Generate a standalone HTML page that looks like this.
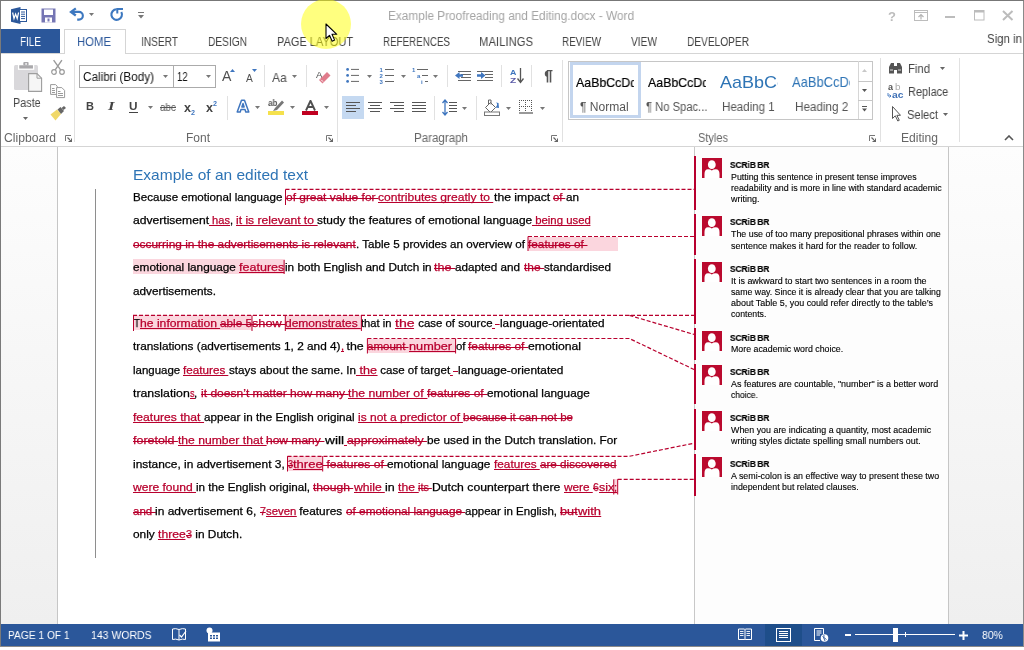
<!DOCTYPE html>
<html><head><meta charset="utf-8">
<style>
*{margin:0;padding:0;box-sizing:border-box}
html,body{width:1024px;height:650px;overflow:hidden;background:#fff;font-family:"Liberation Sans",sans-serif}
.a{position:absolute;white-space:nowrap}
.t{position:absolute;white-space:nowrap;line-height:1;transform-origin:0 0;will-change:transform}
#frameL{left:0;top:0;width:1px;height:647px;background:#7a7a7a}
#frameR{left:1023px;top:0;width:1px;height:647px;background:#8a8a8a}
#frameT{left:0;top:0;width:1024px;height:1px;background:#777}
#frameB{left:0;top:646px;width:1024px;height:1px;background:#8a8a8a}
.tab{font-size:12.5px;color:#444}
.glab{font-size:12px;color:#666}
.sep{position:absolute;width:1px;background:#e1e1e1}
.dl{white-space:pre;font-size:11.1px;color:#000;-webkit-text-stroke:0.25px #000}
.dl u,.dl s{-webkit-text-stroke-color:#b8002e}
.dl u{color:#b8002e;text-decoration:none;background:linear-gradient(#b8002e,#b8002e) 0 11px/100% 1px no-repeat}
.dl s{color:#b8002e;text-decoration:none;background:linear-gradient(#b8002e,#b8002e) 0 7px/100% 1px no-repeat}
.dl i.cb{display:none}
</style></head><body>
<!-- title bar -->
<div class="a" style="left:0;top:0;width:1024px;height:29px;background:#fff"></div>
<div class="t" style="left: 387.5px; top: 10px; font-size: 12.5px; color: rgb(164, 164, 164); transform: scaleX(0.945); transform-origin: 0px 0px;">Example Proofreading and Editing.docx - Word</div>
<!-- tabs -->
<div class="a" style="left:1px;top:29px;width:59px;height:25px;background:#2b579a"></div>
<div class="t tab" style="left: 20px; top: 36px; color: rgb(255, 255, 255); transform: scaleX(0.7953); transform-origin: 0px 0px;">FILE</div>
<div class="a" style="left:64px;top:29px;width:62px;height:25px;border:1px solid #d5d5d5;border-bottom:none;background:#fff;z-index:2"></div>
<div class="t tab" style="left: 77px; top: 36px; color: rgb(43, 87, 154); z-index: 3; transform: scaleX(0.9067); transform-origin: 0px 0px;">HOME</div>
<div class="t tab" style="left: 141px; top: 36px; transform: scaleX(0.811); transform-origin: 0px 0px;">INSERT</div>
<div class="t tab" style="left: 208px; top: 36px; transform: scaleX(0.8136); transform-origin: 0px 0px;">DESIGN</div>
<div class="t tab" style="left: 277px; top: 36px; transform: scaleX(0.8799); transform-origin: 0px 0px;">PAGE LAYOUT</div>
<div class="t tab" style="left: 383px; top: 36px; transform: scaleX(0.7842); transform-origin: 0px 0px;">REFERENCES</div>
<div class="t tab" style="left: 479px; top: 36px; transform: scaleX(0.9038); transform-origin: 0px 0px;">MAILINGS</div>
<div class="t tab" style="left: 562px; top: 36px; transform: scaleX(0.7909); transform-origin: 0px 0px;">REVIEW</div>
<div class="t tab" style="left: 631px; top: 36px; transform: scaleX(0.8137); transform-origin: 0px 0px;">VIEW</div>
<div class="t tab" style="left: 687px; top: 36px; transform: scaleX(0.8113); transform-origin: 0px 0px;">DEVELOPER</div>
<div class="t tab" style="left: 987px; top: 32.3px; font-size: 13px; transform: scaleX(0.8805); transform-origin: 0px 0px;">Sign in</div>
<div class="a" style="left:1px;top:53px;width:1022px;height:1px;background:#d5d5d5;z-index:1"></div>
<!-- ribbon -->
<div class="a" style="left:1px;top:146px;width:1022px;height:1px;background:#d5d5d5"></div>
<div class="sep" style="left:74px;top:60px;height:82px"></div>
<div class="sep" style="left:337px;top:60px;height:82px"></div>
<div class="sep" style="left:562px;top:60px;height:82px"></div>
<div class="sep" style="left:880px;top:58px;height:84px"></div>
<div class="sep" style="left:959px;top:58px;height:84px"></div>
<div class="t glab" style="left: 4px; top: 132px; transform: scaleX(1.0122); transform-origin: 0px 0px;">Clipboard</div>
<div class="t glab" style="left: 186px; top: 132px; transform: scaleX(0.9993); transform-origin: 0px 0px;">Font</div>
<div class="t glab" style="left: 414px; top: 132px; transform: scaleX(0.9635); transform-origin: 0px 0px;">Paragraph</div>
<div class="t glab" style="left: 698px; top: 132px; transform: scaleX(0.9178); transform-origin: 0px 0px;">Styles</div>
<div class="t glab" style="left: 901px; top: 132px; transform: scaleX(1.0081); transform-origin: 0px 0px;">Editing</div>
<!-- doc area -->
<div class="a" style="left:1px;top:147px;width:1022px;height:477px;background:linear-gradient(#fdfdfd,#efefef)"></div>
<div class="a" style="left:57px;top:147px;width:1px;height:477px;background:#c6c6c6"></div>
<div class="a" style="left:58px;top:147px;width:890px;height:477px;background:#fff"></div>
<div class="a" style="left:694px;top:147px;width:1px;height:477px;background:#c8c8c8"></div>
<div class="a" style="left:695px;top:147px;width:253px;height:477px;background:#fdfdfd"></div>
<div class="a" style="left:948px;top:147px;width:1px;height:477px;background:#c6c6c6"></div>
<!-- status bar -->
<div class="a" style="left:1px;top:624px;width:1022px;height:22px;background:#2b579a"></div>
<div class="a" style="left:0;top:647px;width:1024px;height:3px;background:#fff"></div>
<div class="a" style="left:95px;top:189px;width:1px;height:369px;background:#8e8e8e"></div>
<div class="a" style="left:528.00px;top:236.50px;width:90.00px;height:14.25px;background:#fbd6de"></div>
<div class="a" style="left:133.00px;top:259.40px;width:151.50px;height:14.90px;background:#fbd6de"></div>
<div class="a" style="left:133.00px;top:315.40px;width:119.00px;height:15.10px;background:#fbd6de"></div>
<div class="a" style="left:285.30px;top:315.40px;width:76.10px;height:15.10px;background:#fbd6de"></div>
<div class="a" style="left:367.40px;top:338.50px;width:88.20px;height:14.80px;background:#fbd6de"></div>
<div class="a" style="left:287.50px;top:456.20px;width:35.20px;height:15.00px;background:#fbd6de"></div>
<div class="a" style="left:613.75px;top:479.30px;width:3.95px;height:15.20px;background:#fbd6de"></div>
<svg class="a" style="left:0;top:0;z-index:5" width="1024" height="650"><line x1="285.50" y1="189.40" x2="285.50" y2="205.00" stroke="#b8002e" stroke-width="1"></line><line x1="528.00" y1="236.50" x2="528.00" y2="251.00" stroke="#b8002e" stroke-width="1"></line><line x1="284.10" y1="260.00" x2="284.10" y2="274.00" stroke="#b8002e" stroke-width="1"></line><line x1="133.50" y1="315.40" x2="133.50" y2="331.00" stroke="#b8002e" stroke-width="1"></line><line x1="252.00" y1="315.40" x2="252.00" y2="331.00" stroke="#b8002e" stroke-width="1"></line><line x1="285.30" y1="315.40" x2="285.30" y2="331.00" stroke="#b8002e" stroke-width="1"></line><line x1="361.40" y1="315.40" x2="361.40" y2="331.00" stroke="#b8002e" stroke-width="1"></line><line x1="367.40" y1="338.50" x2="367.40" y2="353.50" stroke="#b8002e" stroke-width="1"></line><line x1="455.60" y1="338.50" x2="455.60" y2="353.50" stroke="#b8002e" stroke-width="1"></line><line x1="287.50" y1="456.20" x2="287.50" y2="471.50" stroke="#b8002e" stroke-width="1"></line><line x1="322.70" y1="456.20" x2="322.70" y2="471.50" stroke="#b8002e" stroke-width="1"></line><line x1="613.75" y1="479.30" x2="613.75" y2="494.50" stroke="#b8002e" stroke-width="1"></line><line x1="617.70" y1="479.30" x2="617.70" y2="494.50" stroke="#b8002e" stroke-width="1"></line><path d="M285.5 189.4 H694" fill="none" stroke="#b8002e" stroke-width="1.2" stroke-dasharray="4 2"></path><path d="M528 236.5 H694" fill="none" stroke="#b8002e" stroke-width="1.2" stroke-dasharray="4 2"></path><path d="M133 315.4 H694" fill="none" stroke="#b8002e" stroke-width="1.2" stroke-dasharray="4 2"></path><path d="M629.4 315.4 L694 334.4" fill="none" stroke="#b8002e" stroke-width="1.2" stroke-dasharray="4 2"></path><path d="M367.4 338.5 H629.4 L694 369.5" fill="none" stroke="#b8002e" stroke-width="1.2" stroke-dasharray="4 2"></path><path d="M287.5 456.3 H629.3 L694 443.2" fill="none" stroke="#b8002e" stroke-width="1.2" stroke-dasharray="4 2"></path><path d="M617.7 479.3 H694" fill="none" stroke="#b8002e" stroke-width="1.2" stroke-dasharray="4 2"></path></svg>
<div class="t dl" style="left: 133px; top: 192.4px; transform: scaleX(1.0439); transform-origin: 0px 0px;">Because emotional language </div>
<div class="t dl" style="left: 285.6px; top: 192.4px; transform: scaleX(1.0748); transform-origin: 0px 0px;"><s>of great value for </s></div>
<div class="t dl" style="left: 378.4px; top: 192.4px; transform: scaleX(1.0871); transform-origin: 0px 0px;"><u>contributes greatly to </u></div>
<div class="t dl" style="left: 493.7px; top: 192.4px; transform: scaleX(1.0983); transform-origin: 0px 0px;">the impact </div>
<div class="t dl" style="left: 553.3px; top: 192.4px; transform: scaleX(1.0289); transform-origin: 0px 0px;"><s>of </s></div>
<div class="t dl" style="left: 566px; top: 192.4px; transform: scaleX(1.0532); transform-origin: 0px 0px;">an</div>
<div class="t dl" style="left: 133px; top: 215.4px; transform: scaleX(1.0906); transform-origin: 0px 0px;">advertisement</div>
<div class="t dl" style="left: 209px; top: 215.4px; transform: scaleX(0.9824); transform-origin: 0px 0px;"><u> has</u></div>
<div class="t dl" style="left: 229.6px; top: 215.4px; transform: scaleX(0.9884); transform-origin: 0px 0px;">, </div>
<div class="t dl" style="left: 235.7px; top: 215.4px; transform: scaleX(1.0897); transform-origin: 0px 0px;"><u>it is relevant to </u></div>
<div class="t dl" style="left: 317px; top: 215.4px; transform: scaleX(1.0736); transform-origin: 0px 0px;">study the features of emotional language</div>
<div class="t dl" style="left: 532.2px; top: 215.4px; transform: scaleX(1.0248); transform-origin: 0px 0px;"><u> being used</u></div>
<div class="t dl" style="left: 133px; top: 239.4px; transform: scaleX(1.0717); transform-origin: 0px 0px;"><s>occurring in the advertisements is relevant</s></div>
<div class="t dl" style="left: 355.7px; top: 239.4px; transform: scaleX(1.0477); transform-origin: 0px 0px;">. Table 5 provides an overview of </div>
<div class="t dl" style="left: 528px; top: 239.4px; transform: scaleX(1.0628); transform-origin: 0px 0px;"><s>features of </s></div>
<div class="t dl" style="left: 133px; top: 262.4px; transform: scaleX(1.0628); transform-origin: 0px 0px;">emotional language </div>
<div class="t dl" style="left: 239.2px; top: 262.4px; transform: scaleX(1.1299); transform-origin: 0px 0px;"><u>features</u></div>
<div class="t dl" style="left: 284.5px; top: 262.4px; transform: scaleX(1.0614); transform-origin: 0px 0px;">in both English and Dutch in </div>
<div class="t dl" style="left: 434.4px; top: 262.4px; transform: scaleX(1.1288); transform-origin: 0px 0px;"><s>the </s></div>
<div class="t dl" style="left: 455.3px; top: 262.4px; transform: scaleX(1.0543); transform-origin: 0px 0px;">adapted and </div>
<div class="t dl" style="left: 523.6px; top: 262.4px; transform: scaleX(1.0748); transform-origin: 0px 0px;"><s>the </s></div>
<div class="t dl" style="left: 543.5px; top: 262.4px; transform: scaleX(1.0546); transform-origin: 0px 0px;">standardised</div>
<div class="t dl" style="left: 133px; top: 286.4px; transform: scaleX(1.0599); transform-origin: 0px 0px;">advertisements.</div>
<div class="t dl" style="left: 133.5px; top: 318.4px; transform: scaleX(0.8848); transform-origin: 0px 0px;">T</div>
<div class="t dl" style="left: 139.5px; top: 318.4px; transform: scaleX(1.0969); transform-origin: 0px 0px;"><u>he information </u></div>
<div class="t dl" style="left: 220px; top: 318.4px; transform: scaleX(1.0584); transform-origin: 0px 0px;"><s>able 5</s></div>
<div class="t dl" style="left: 252px; top: 318.4px; transform: scaleX(1.1489); transform-origin: 0px 0px;"><s>show </s></div>
<div class="t dl" style="left: 285.3px; top: 318.4px; transform: scaleX(1.0826); transform-origin: 0px 0px;"><u>demonstrates </u></div>
<div class="t dl" style="left: 361.4px; top: 318.4px; transform: scaleX(1.0086); transform-origin: 0px 0px;">that in </div>
<div class="t dl" style="left: 395px; top: 318.4px; transform: scaleX(1.2709); transform-origin: 0px 0px;"><u>the</u></div>
<div class="t dl" style="left: 414.6px; top: 318.4px; transform: scaleX(1.0301); transform-origin: 0px 0px;"> case of source</div>
<div class="t dl" style="left: 492.1px; top: 318.4px; transform: scaleX(1.002); transform-origin: 0px 0px;"><u> </u></div>
<div class="t dl" style="left: 495.2px; top: 318.4px; transform: scaleX(1.1612); transform-origin: 0px 0px;"><s>-</s></div>
<div class="t dl" style="left: 499.5px; top: 318.4px; transform: scaleX(1.0587); transform-origin: 0px 0px;">language-orientated</div>
<div class="t dl" style="left: 133px; top: 341.4px; transform: scaleX(1.0649); transform-origin: 0px 0px;">translations (advertisements 1, 2 and 4)</div>
<div class="t dl" style="left: 340.5px; top: 341.4px; transform: scaleX(0.9051); transform-origin: 0px 0px;"><u>,</u></div>
<div class="t dl" style="left: 343.3px; top: 341.4px; transform: scaleX(1.1161); transform-origin: 0px 0px;"> the </div>
<div class="t dl" style="left: 367.4px; top: 341.4px; transform: scaleX(1.0376); transform-origin: 0px 0px;"><s>amount </s></div>
<div class="t dl" style="left: 409px; top: 341.4px; transform: scaleX(1.1449); transform-origin: 0px 0px;"><u>number </u></div>
<div class="t dl" style="left: 455.6px; top: 341.4px; transform: scaleX(1.0289); transform-origin: 0px 0px;">of </div>
<div class="t dl" style="left: 468.3px; top: 341.4px; transform: scaleX(1.0754); transform-origin: 0px 0px;"><s>features of </s></div>
<div class="t dl" style="left: 528px; top: 341.4px; transform: scaleX(1.1017); transform-origin: 0px 0px;">emotional</div>
<div class="t dl" style="left: 133px; top: 365.4px; transform: scaleX(1.0338); transform-origin: 0px 0px;">language </div>
<div class="t dl" style="left: 183.4px; top: 365.4px; transform: scaleX(1.0539); transform-origin: 0px 0px;"><u>features </u></div>
<div class="t dl" style="left: 228.9px; top: 365.4px; transform: scaleX(1.0515); transform-origin: 0px 0px;">stays about the same. In</div>
<div class="t dl" style="left: 356px; top: 365.4px; transform: scaleX(1.1342); transform-origin: 0px 0px;"><u> the</u></div>
<div class="t dl" style="left: 377px; top: 365.4px; transform: scaleX(1.0396); transform-origin: 0px 0px;"> case of target</div>
<div class="t dl" style="left: 450.1px; top: 365.4px; transform: scaleX(0.9374); transform-origin: 0px 0px;"><u> </u></div>
<div class="t dl" style="left: 453px; top: 365.4px; transform: scaleX(1.2422); transform-origin: 0px 0px;"><s>-</s></div>
<div class="t dl" style="left: 457.6px; top: 365.4px; transform: scaleX(1.0678); transform-origin: 0px 0px;">language-orientated</div>
<div class="t dl" style="left: 133px; top: 388.4px; transform: scaleX(1.1096); transform-origin: 0px 0px;">translation</div>
<div class="t dl" style="left: 189.8px; top: 388.4px; transform: scaleX(0.8293); transform-origin: 0px 0px;"><u>s</u></div>
<div class="t dl" style="left: 194.4px; top: 388.4px; transform: scaleX(1.037); transform-origin: 0px 0px;">, </div>
<div class="t dl" style="left: 200.8px; top: 388.4px; transform: scaleX(1.0866); transform-origin: 0px 0px;"><s>it doesn’t matter how many </s></div>
<div class="t dl" style="left: 348.2px; top: 388.4px; transform: scaleX(1.1042); transform-origin: 0px 0px;"><u>the number of </u></div>
<div class="t dl" style="left: 427.2px; top: 388.4px; transform: scaleX(1.0808); transform-origin: 0px 0px;"><s>features of </s></div>
<div class="t dl" style="left: 487.2px; top: 388.4px; transform: scaleX(1.0615); transform-origin: 0px 0px;">emotional language</div>
<div class="t dl" style="left: 133px; top: 412.4px; transform: scaleX(1.0932); transform-origin: 0px 0px;"><u>features that </u></div>
<div class="t dl" style="left: 203.8px; top: 412.4px; transform: scaleX(1.0522); transform-origin: 0px 0px;">appear in the English original </div>
<div class="t dl" style="left: 357.6px; top: 412.4px; transform: scaleX(1.0817); transform-origin: 0px 0px;"><u>is not a predictor of </u></div>
<div class="t dl" style="left: 463px; top: 412.4px; transform: scaleX(1.043); transform-origin: 0px 0px;"><s>because it can not be</s></div>
<div class="t dl" style="left: 133px; top: 435.4px; transform: scaleX(1.1224); transform-origin: 0px 0px;"><s>foretold </s></div>
<div class="t dl" style="left: 178px; top: 435.4px; transform: scaleX(1.0941); transform-origin: 0px 0px;"><u>the number that </u></div>
<div class="t dl" style="left: 266.4px; top: 435.4px; transform: scaleX(1.0828); transform-origin: 0px 0px;"><s>how many </s></div>
<div class="t dl" style="left: 324.5px; top: 435.4px; transform: scaleX(1.2333); transform-origin: 0px 0px;">will</div>
<div class="t dl" style="left: 343.5px; top: 435.4px; transform: scaleX(1.002); transform-origin: 0px 0px;"><u> </u></div>
<div class="t dl" style="left: 346.6px; top: 435.4px; transform: scaleX(1.1101); transform-origin: 0px 0px;"><s>approximately </s></div>
<div class="t dl" style="left: 426.7px; top: 435.4px; transform: scaleX(1.0641); transform-origin: 0px 0px;">be used in the Dutch translation. For</div>
<div class="t dl" style="left: 133px; top: 459.4px; transform: scaleX(1.0742); transform-origin: 0px 0px;">instance, in advertisement 3, </div>
<div class="t dl" style="left: 288px; top: 459.4px; transform: scaleX(0.8101); transform-origin: 0px 0px;"><s>3</s></div>
<div class="t dl" style="left: 293px; top: 459.4px; transform: scaleX(1.1741); transform-origin: 0px 0px;"><u>three</u></div>
<div class="t dl" style="left: 322.7px; top: 459.4px; transform: scaleX(1.0974); transform-origin: 0px 0px;"><s> features of </s></div>
<div class="t dl" style="left: 387px; top: 459.4px; transform: scaleX(1.0678); transform-origin: 0px 0px;">emotional language </div>
<div class="t dl" style="left: 493.7px; top: 459.4px; transform: scaleX(1.0632); transform-origin: 0px 0px;"><u>features </u></div>
<div class="t dl" style="left: 539.6px; top: 459.4px; transform: scaleX(1.0499); transform-origin: 0px 0px;"><s>are discovered</s></div>
<div class="t dl" style="left: 133px; top: 482.4px; transform: scaleX(1.0865); transform-origin: 0px 0px;"><u>were found </u></div>
<div class="t dl" style="left: 196px; top: 482.4px; transform: scaleX(1.0508); transform-origin: 0px 0px;">in the English original, </div>
<div class="t dl" style="left: 313.3px; top: 482.4px; transform: scaleX(1.086); transform-origin: 0px 0px;"><s>though </s></div>
<div class="t dl" style="left: 353.5px; top: 482.4px; transform: scaleX(1.0996); transform-origin: 0px 0px;"><u>while </u></div>
<div class="t dl" style="left: 384.7px; top: 482.4px; transform: scaleX(1.1264); transform-origin: 0px 0px;">in </div>
<div class="t dl" style="left: 397.9px; top: 482.4px; transform: scaleX(1.0964); transform-origin: 0px 0px;"><u>the </u></div>
<div class="t dl" style="left: 418.2px; top: 482.4px; transform: scaleX(0.9868); transform-origin: 0px 0px;"><s>its </s></div>
<div class="t dl" style="left: 432.2px; top: 482.4px; transform: scaleX(1.1008); transform-origin: 0px 0px;">Dutch counterpart there </div>
<div class="t dl" style="left: 563.9px; top: 482.4px; transform: scaleX(1.0648); transform-origin: 0px 0px;"><u>were </u></div>
<div class="t dl" style="left: 592.8px; top: 482.4px; transform: scaleX(0.9235); transform-origin: 0px 0px;"><s>6</s></div>
<div class="t dl" style="left: 598.5px; top: 482.4px; transform: scaleX(1.1244); transform-origin: 0px 0px;"><u>six</u></div>
<div class="t dl" style="left: 133px; top: 506.4px; transform: scaleX(1.0373); transform-origin: 0px 0px;"><s>and </s></div>
<div class="t dl" style="left: 155.4px; top: 506.4px; transform: scaleX(1.0804); transform-origin: 0px 0px;">in advertisement 6, </div>
<div class="t dl" style="left: 260px; top: 506.4px; transform: scaleX(0.9559); transform-origin: 0px 0px;"><s>7</s></div>
<div class="t dl" style="left: 265.9px; top: 506.4px; transform: scaleX(1.0267); transform-origin: 0px 0px;"><u>seven</u></div>
<div class="t dl" style="left: 296.3px; top: 506.4px; transform: scaleX(1.0703); transform-origin: 0px 0px;"> features </div>
<div class="t dl" style="left: 345.8px; top: 506.4px; transform: scaleX(1.0627); transform-origin: 0px 0px;"><s>of emotional language </s></div>
<div class="t dl" style="left: 465.1px; top: 506.4px; transform: scaleX(1.0358); transform-origin: 0px 0px;">appear in English, </div>
<div class="t dl" style="left: 560.3px; top: 506.4px; transform: scaleX(1.1477); transform-origin: 0px 0px;"><s>but</s></div>
<div class="t dl" style="left: 578px; top: 506.4px; transform: scaleX(1.1655); transform-origin: 0px 0px;"><u>with</u></div>
<div class="t dl" style="left: 133px; top: 529.4px; transform: scaleX(1.0709); transform-origin: 0px 0px;">only </div>
<div class="t dl" style="left: 158.1px; top: 529.4px; transform: scaleX(1.0989); transform-origin: 0px 0px;"><u>three</u></div>
<div class="t dl" style="left: 185.9px; top: 529.4px; transform: scaleX(0.9559); transform-origin: 0px 0px;"><s>3</s></div>
<div class="t dl" style="left: 191.8px; top: 529.4px; transform: scaleX(1.0709); transform-origin: 0px 0px;"> in Dutch.</div>
<div class="t dl" style="left:614px;top:482.40px"><u>;</u></div>
<div class="a" style="left:694px;top:156.0px;width:2.4px;height:53.5px;background:#b8002e"></div>
<div class="a" style="left:694px;top:213.7px;width:2.4px;height:41.6px;background:#b8002e"></div>
<div class="a" style="left:694px;top:259.4px;width:2.4px;height:64.9px;background:#b8002e"></div>
<div class="a" style="left:694px;top:328.3px;width:2.4px;height:31.9px;background:#b8002e"></div>
<div class="a" style="left:694px;top:363.8px;width:2.4px;height:40.7px;background:#b8002e"></div>
<div class="a" style="left:694px;top:409.2px;width:2.4px;height:41.0px;background:#b8002e"></div>
<div class="a" style="left:694px;top:454.3px;width:2.4px;height:41.6px;background:#b8002e"></div>
<svg class="a" style="left:702px;top:158px" width="20" height="20" viewBox="0 0 20 20"><rect width="20" height="20" fill="#ba0a2e"></rect><ellipse cx="9.8" cy="6.7" rx="3.9" ry="4.4" fill="#fff"></ellipse><path d="M2.5 20 V16 Q2.5 11.3 6 11.3 Q8.5 11.3 9.8 12.6 Q11.1 11.3 13.8 11.3 Q17.5 11.3 17.5 16 V20 Z" fill="#fff"></path></svg>
<div class="t" style="left: 730.4px; top: 159.84px; font-size: 9.4px; font-weight: bold; color: rgb(0, 0, 0); -webkit-text-stroke: 0.2px rgb(0, 0, 0); transform: scaleX(0.8835); transform-origin: 0px 0px;">SCRiB BR</div>
<div class="t" style="left: 730.6px; top: 172.62px; font-size: 8.6px; color: rgb(0, 0, 0); -webkit-text-stroke: 0.12px rgb(0, 0, 0); transform: scaleX(1.0278); transform-origin: 0px 0px;">Putting this sentence in present tense improves</div>
<div class="t" style="left: 730.6px; top: 184.02px; font-size: 8.6px; color: rgb(0, 0, 0); -webkit-text-stroke: 0.12px rgb(0, 0, 0); transform: scaleX(1.0325); transform-origin: 0px 0px;">readability and is more in line with standard academic</div>
<div class="t" style="left: 730.6px; top: 195.22px; font-size: 8.6px; color: rgb(0, 0, 0); -webkit-text-stroke: 0.12px rgb(0, 0, 0); transform: scaleX(1.0428); transform-origin: 0px 0px;">writing.</div>
<svg class="a" style="left:702px;top:216px" width="20" height="20" viewBox="0 0 20 20"><rect width="20" height="20" fill="#ba0a2e"></rect><ellipse cx="9.8" cy="6.7" rx="3.9" ry="4.4" fill="#fff"></ellipse><path d="M2.5 20 V16 Q2.5 11.3 6 11.3 Q8.5 11.3 9.8 12.6 Q11.1 11.3 13.8 11.3 Q17.5 11.3 17.5 16 V20 Z" fill="#fff"></path></svg>
<div class="t" style="left: 730.4px; top: 217.24px; font-size: 9.4px; font-weight: bold; color: rgb(0, 0, 0); -webkit-text-stroke: 0.2px rgb(0, 0, 0); transform: scaleX(0.8835); transform-origin: 0px 0px;">SCRiB BR</div>
<div class="t" style="left: 730.6px; top: 230.22px; font-size: 8.6px; color: rgb(0, 0, 0); -webkit-text-stroke: 0.12px rgb(0, 0, 0); transform: scaleX(1.0309); transform-origin: 0px 0px;">The use of too many prepositional phrases within one</div>
<div class="t" style="left: 730.6px; top: 241.52px; font-size: 8.6px; color: rgb(0, 0, 0); -webkit-text-stroke: 0.12px rgb(0, 0, 0); transform: scaleX(1.0422); transform-origin: 0px 0px;">sentence makes it hard for the reader to follow.</div>
<svg class="a" style="left:702px;top:262px" width="20" height="20" viewBox="0 0 20 20"><rect width="20" height="20" fill="#ba0a2e"></rect><ellipse cx="9.8" cy="6.7" rx="3.9" ry="4.4" fill="#fff"></ellipse><path d="M2.5 20 V16 Q2.5 11.3 6 11.3 Q8.5 11.3 9.8 12.6 Q11.1 11.3 13.8 11.3 Q17.5 11.3 17.5 16 V20 Z" fill="#fff"></path></svg>
<div class="t" style="left: 730.4px; top: 263.64px; font-size: 9.4px; font-weight: bold; color: rgb(0, 0, 0); -webkit-text-stroke: 0.2px rgb(0, 0, 0); transform: scaleX(0.8835); transform-origin: 0px 0px;">SCRiB BR</div>
<div class="t" style="left: 730.6px; top: 276.62px; font-size: 8.6px; color: rgb(0, 0, 0); -webkit-text-stroke: 0.12px rgb(0, 0, 0); transform: scaleX(1.0393); transform-origin: 0px 0px;">It is awkward to start two sentences in a room the</div>
<div class="t" style="left: 730.6px; top: 287.92px; font-size: 8.6px; color: rgb(0, 0, 0); -webkit-text-stroke: 0.12px rgb(0, 0, 0); transform: scaleX(1.0175); transform-origin: 0px 0px;">same way. Since it is already clear that you are talking</div>
<div class="t" style="left: 730.6px; top: 299.12px; font-size: 8.6px; color: rgb(0, 0, 0); -webkit-text-stroke: 0.12px rgb(0, 0, 0); transform: scaleX(1.0437); transform-origin: 0px 0px;">about Table 5, you could refer directly to the table’s</div>
<div class="t" style="left: 730.6px; top: 310.42px; font-size: 8.6px; color: rgb(0, 0, 0); -webkit-text-stroke: 0.12px rgb(0, 0, 0); transform: scaleX(1.0151); transform-origin: 0px 0px;">contents.</div>
<svg class="a" style="left:702px;top:331px" width="20" height="20" viewBox="0 0 20 20"><rect width="20" height="20" fill="#ba0a2e"></rect><ellipse cx="9.8" cy="6.7" rx="3.9" ry="4.4" fill="#fff"></ellipse><path d="M2.5 20 V16 Q2.5 11.3 6 11.3 Q8.5 11.3 9.8 12.6 Q11.1 11.3 13.8 11.3 Q17.5 11.3 17.5 16 V20 Z" fill="#fff"></path></svg>
<div class="t" style="left: 730.4px; top: 333.04px; font-size: 9.4px; font-weight: bold; color: rgb(0, 0, 0); -webkit-text-stroke: 0.2px rgb(0, 0, 0); transform: scaleX(0.8835); transform-origin: 0px 0px;">SCRiB BR</div>
<div class="t" style="left: 730.6px; top: 345.22px; font-size: 8.6px; color: rgb(0, 0, 0); -webkit-text-stroke: 0.12px rgb(0, 0, 0); transform: scaleX(1.0257); transform-origin: 0px 0px;">More academic word choice.</div>
<svg class="a" style="left:702px;top:365px" width="20" height="20" viewBox="0 0 20 20"><rect width="20" height="20" fill="#ba0a2e"></rect><ellipse cx="9.8" cy="6.7" rx="3.9" ry="4.4" fill="#fff"></ellipse><path d="M2.5 20 V16 Q2.5 11.3 6 11.3 Q8.5 11.3 9.8 12.6 Q11.1 11.3 13.8 11.3 Q17.5 11.3 17.5 16 V20 Z" fill="#fff"></path></svg>
<div class="t" style="left: 730.4px; top: 367.04px; font-size: 9.4px; font-weight: bold; color: rgb(0, 0, 0); -webkit-text-stroke: 0.2px rgb(0, 0, 0); transform: scaleX(0.8835); transform-origin: 0px 0px;">SCRiB BR</div>
<div class="t" style="left: 730.6px; top: 379.62px; font-size: 8.6px; color: rgb(0, 0, 0); -webkit-text-stroke: 0.12px rgb(0, 0, 0); transform: scaleX(1.0407); transform-origin: 0px 0px;">As features are countable, "number" is a better word</div>
<div class="t" style="left: 730.6px; top: 390.92px; font-size: 8.6px; color: rgb(0, 0, 0); -webkit-text-stroke: 0.12px rgb(0, 0, 0); transform: scaleX(0.9877); transform-origin: 0px 0px;">choice.</div>
<svg class="a" style="left:702px;top:411px" width="20" height="20" viewBox="0 0 20 20"><rect width="20" height="20" fill="#ba0a2e"></rect><ellipse cx="9.8" cy="6.7" rx="3.9" ry="4.4" fill="#fff"></ellipse><path d="M2.5 20 V16 Q2.5 11.3 6 11.3 Q8.5 11.3 9.8 12.6 Q11.1 11.3 13.8 11.3 Q17.5 11.3 17.5 16 V20 Z" fill="#fff"></path></svg>
<div class="t" style="left: 730.4px; top: 412.84px; font-size: 9.4px; font-weight: bold; color: rgb(0, 0, 0); -webkit-text-stroke: 0.2px rgb(0, 0, 0); transform: scaleX(0.8835); transform-origin: 0px 0px;">SCRiB BR</div>
<div class="t" style="left: 730.6px; top: 425.52px; font-size: 8.6px; color: rgb(0, 0, 0); -webkit-text-stroke: 0.12px rgb(0, 0, 0); transform: scaleX(1.0331); transform-origin: 0px 0px;">When you are indicating a quantity, most academic</div>
<div class="t" style="left: 730.6px; top: 436.82px; font-size: 8.6px; color: rgb(0, 0, 0); -webkit-text-stroke: 0.12px rgb(0, 0, 0); transform: scaleX(1.0342); transform-origin: 0px 0px;">writing styles dictate spelling small numbers out.</div>
<svg class="a" style="left:702px;top:457px" width="20" height="20" viewBox="0 0 20 20"><rect width="20" height="20" fill="#ba0a2e"></rect><ellipse cx="9.8" cy="6.7" rx="3.9" ry="4.4" fill="#fff"></ellipse><path d="M2.5 20 V16 Q2.5 11.3 6 11.3 Q8.5 11.3 9.8 12.6 Q11.1 11.3 13.8 11.3 Q17.5 11.3 17.5 16 V20 Z" fill="#fff"></path></svg>
<div class="t" style="left: 730.4px; top: 458.74px; font-size: 9.4px; font-weight: bold; color: rgb(0, 0, 0); -webkit-text-stroke: 0.2px rgb(0, 0, 0); transform: scaleX(0.8835); transform-origin: 0px 0px;">SCRiB BR</div>
<div class="t" style="left: 730.6px; top: 471.62px; font-size: 8.6px; color: rgb(0, 0, 0); -webkit-text-stroke: 0.12px rgb(0, 0, 0); transform: scaleX(1.0332); transform-origin: 0px 0px;">A semi-colon is an effective way to present these two</div>
<div class="t" style="left: 730.6px; top: 483.02px; font-size: 8.6px; color: rgb(0, 0, 0); -webkit-text-stroke: 0.12px rgb(0, 0, 0); transform: scaleX(1.0279); transform-origin: 0px 0px;">independent but related clauses.</div>
<svg class="a" style="left:10px;top:6.5px;z-index:4" width="17" height="17" viewBox="0 0 17 17"><path d="M1 2.2 L10.5 0 V17 L1 14.8 Z" fill="#2b579a"></path><rect x="9.5" y="2.5" width="7" height="12" fill="#fff" stroke="#2b579a" stroke-width="1"></rect><path d="M11 5 H15 M11 7.2 H15 M11 9.4 H15 M11 11.6 H15" stroke="#2b579a" stroke-width="1"></path><path d="M2.6 5.5 L4 11.5 L5.6 7 L7.2 11.5 L8.6 5.5" fill="none" stroke="#fff" stroke-width="1.2"></path></svg>
<svg class="a" style="left:41px;top:8px;z-index:4" width="15" height="15" viewBox="0 0 15 15"><path d="M0.5 0.5 H14.5 V14.5 H0.5 Z" fill="#7676b4"></path><rect x="3" y="1.5" width="9" height="5.5" fill="#fff"></rect><rect x="4" y="9.5" width="7" height="5" fill="#fff"></rect><rect x="6.5" y="10.5" width="2" height="3" fill="#7676b4"></rect></svg>
<svg class="a" style="left:69px;top:7px;z-index:4" width="17" height="15" viewBox="0 0 17 15"><path d="M3 4.9 H10 A3.85 3.85 0 0 1 10 12.6 H8.2" fill="none" stroke="#3d78c0" stroke-width="2.1"></path><path d="M6.8 1.3 L2 4.9 L6.8 8.5" fill="none" stroke="#3d78c0" stroke-width="2.3" stroke-linejoin="miter"></path></svg>
<svg class="a" style="left:89px;top:13px;z-index:4" width="6" height="4" viewBox="0 0 6 4"><path d="M0 0 H5 L2.5 3 Z" fill="#777"></path></svg>
<svg class="a" style="left:109px;top:7px;z-index:4" width="16" height="16" viewBox="0 0 16 16"><path d="M7.6 2.3 A5.3 5.3 0 1 0 12.3 5" fill="none" stroke="#3d78c0" stroke-width="2.1"></path><path d="M7.3 2 H14 M8.3 1 V6.5" fill="none" stroke="#3d78c0" stroke-width="2"></path></svg>
<svg class="a" style="left:137px;top:11px;z-index:4" width="8" height="9" viewBox="0 0 8 9"><path d="M1 1.5 H7" stroke="#777" stroke-width="1"></path><path d="M1 4 H7 L4 7.5 Z" fill="#777"></path></svg>
<div class="t" style="left:888px;top:9.5px;font-size:13px;color:#bcbcbc;font-weight:bold">?</div>
<svg class="a" style="left:914px;top:10px;z-index:4" width="14" height="11" viewBox="0 0 14 11"><rect x="0.5" y="0.5" width="13" height="10" fill="none" stroke="#bcbcbc"></rect><path d="M0.5 2.5 H13.5" stroke="#bcbcbc"></path><path d="M7 9.5 V4.5 M4.5 7 L7 4.5 L9.5 7" fill="none" stroke="#b5b5b5" stroke-width="1.2"></path></svg>
<svg class="a" style="left:945px;top:16px;z-index:4" width="10" height="2" viewBox="0 0 10 2"><rect width="10" height="2" fill="#bcbcbc"></rect></svg>
<svg class="a" style="left:974px;top:10px;z-index:4" width="11" height="11" viewBox="0 0 11 11"><rect x="0.5" y="0.5" width="9.5" height="9.5" fill="none" stroke="#bcbcbc"></rect><rect x="0.5" y="0.5" width="9.5" height="2" fill="#bcbcbc"></rect></svg>
<svg class="a" style="left:1002px;top:10px;z-index:4" width="12" height="11" viewBox="0 0 12 11"><path d="M1 1 L10.5 10 M10.5 1 L1 10" stroke="#bcbcbc" stroke-width="2"></path></svg>
<svg class="a" style="left:13px;top:61px;z-index:4" width="31" height="32" viewBox="0 0 31 32"><rect x="1" y="3.9" width="24" height="25" rx="1.5" fill="#d9d8db"></rect><rect x="5.6" y="3.6" width="15" height="4.6" fill="#a9a8ab" stroke="#fff" stroke-width="1.3"></rect><rect x="10.3" y="1" width="5.3" height="3.6" rx="1" fill="#a9a8ab"></rect><rect x="12.3" y="2.2" width="1.6" height="1.5" fill="#fff"></rect><path d="M15.6 12.6 H24 L28.6 17.2 V30.4 H15.6 Z" fill="#f6f6f6" stroke="#9e9e9e" stroke-width="1.1"></path><path d="M24 12.6 V17.2 H28.6" fill="none" stroke="#9e9e9e" stroke-width="1"></path></svg>
<div class="t" style="left: 12.7px; top: 96.64px; font-size: 12px; color: rgb(68, 68, 68); transform: scaleX(0.8994); transform-origin: 0px 0px;">Paste</div>
<svg class="a" style="left:23px;top:117px;z-index:4" width="6" height="4" viewBox="0 0 6 4"><path d="M0 0 H5 L2.5 3 Z" fill="#666"></path></svg>
<svg class="a" style="left:50px;top:59px;z-index:4" width="17" height="17" viewBox="0 0 17 17"><path d="M3.6 1.2 L10.6 10.9 M11.9 1.2 L5.2 10.9" stroke="#9a9a9a" stroke-width="1.4"></path><circle cx="4" cy="13" r="2.3" fill="none" stroke="#9a9a9a" stroke-width="1.2"></circle><circle cx="12" cy="13" r="2.3" fill="none" stroke="#9a9a9a" stroke-width="1.2"></circle></svg>
<svg class="a" style="left:50px;top:83px;z-index:4" width="16" height="16" viewBox="0 0 16 16"><path d="M0.6 1.6 H5.6 L7.2 3.2 V11.4 H0.6 Z" fill="#fff" stroke="#9a9a9a" stroke-width="1"></path><path d="M2 5.5 H4.5 M2 7.5 H5 M2 9.5 H5" stroke="#9a9a9a" stroke-width="1"></path><path d="M6.6 4.6 H11.8 L14.6 7.4 V14.6 H6.6 Z" fill="#fff" stroke="#9a9a9a" stroke-width="1"></path><path d="M8 8.5 H10.5 M8 10.5 H13 M8 12.5 H13" stroke="#9a9a9a" stroke-width="1"></path></svg>
<svg class="a" style="left:50px;top:106px;z-index:4" width="17" height="15" viewBox="0 0 17 15"><path d="M0.5 8.5 L7 3.5 L11 8 L5.5 14.5 Z" fill="#f0d868"></path><path d="M7.5 3.5 L10.5 1 L14 5 L11 8 Z" fill="#666"></path><path d="M11.5 2 L14 0 L16 2 L13.5 4 Z" fill="#666"></path></svg>
<div class="a" style="left:79px;top:65px;width:95px;height:23px;border:1px solid #ababab;background:#fff"></div>
<div class="a" style="left:173px;top:65px;width:43px;height:23px;border:1px solid #ababab;background:#fff"></div>
<div class="t" style="left: 82.5px; top: 70.54px; font-size: 12px; color: rgb(17, 17, 17); transform: scaleX(0.9768); transform-origin: 0px 0px;">Calibri (Body)</div>
<svg class="a" style="left:163px;top:75px;z-index:4" width="6" height="4" viewBox="0 0 6 4"><path d="M0 0 H5 L2.5 3 Z" fill="#777"></path></svg>
<div class="t" style="left: 177px; top: 70.84px; font-size: 12px; color: rgb(17, 17, 17); transform: scaleX(0.7935); transform-origin: 0px 0px;">12</div>
<svg class="a" style="left:206px;top:75px;z-index:4" width="6" height="4" viewBox="0 0 6 4"><path d="M0 0 H5 L2.5 3 Z" fill="#777"></path></svg>
<div class="t" style="left: 222.3px; top: 70.32px; font-size: 13.8px; color: rgb(80, 80, 80); transform: scaleX(1.0214); transform-origin: 0px 0px;">A</div>
<svg class="a" style="left:230px;top:69px;z-index:4" width="6" height="4" viewBox="0 0 6 4"><path d="M0 3 H5 L2.5 0 Z" fill="#3f76bf"></path></svg>
<div class="t" style="left: 245.5px; top: 73.53px; font-size: 10px; color: rgb(80, 80, 80); transform: scaleX(1.0192); transform-origin: 0px 0px;">A</div>
<svg class="a" style="left:252px;top:69px;z-index:4" width="6" height="4" viewBox="0 0 6 4"><path d="M0 0 H5 L2.5 3 Z" fill="#3f76bf"></path></svg>
<div class="sep" style="left:264px;top:65px;height:22px"></div>
<div class="t" style="left: 272.4px; top: 70.57px; font-size: 13.5px; color: rgb(80, 80, 80); transform: scaleX(0.8961); transform-origin: 0px 0px;">Aa</div>
<svg class="a" style="left:292px;top:75px;z-index:4" width="6" height="4" viewBox="0 0 6 4"><path d="M0 0 H5 L2.5 3 Z" fill="#777"></path></svg>
<div class="sep" style="left:306px;top:65px;height:22px"></div>
<div class="t" style="left: 316px; top: 69.96px; font-size: 9.5px; color: rgb(80, 80, 80); transform: scaleX(1.0246); transform-origin: 0px 0px;">A</div>
<svg class="a" style="left:318px;top:69px;z-index:4" width="14" height="15" viewBox="0 0 14 15"><path d="M5.5 13.5 L12.5 6.5 L9 3 L2 10 Z" fill="#e07c8c"></path><path d="M2 10 L5.5 13.5 L4.5 14.5 L1 11 Z" fill="#e07c8c"></path><path d="M3.5 11 L5 12.5" stroke="#fff" stroke-width="0.8"></path></svg>
<div class="t" style="left: 85.5px; top: 101.09px; font-size: 11px; color: rgb(68, 68, 68); font-weight: bold; transform: scaleX(0.9556); transform-origin: 0px 0px;">B</div>
<div class="t" style="left: 107.5px; top: 100.67px; font-size: 11.5px; color: rgb(68, 68, 68); font-style: italic; font-family: &quot;Liberation Serif&quot;, serif; font-weight: bold; transform: scaleX(1.4495); transform-origin: 0px 0px;">I</div>
<div class="t" style="left: 129.2px; top: 101.09px; font-size: 11px; color: rgb(68, 68, 68); font-weight: bold; transform: scaleX(1.0688); transform-origin: 0px 0px;">U</div>
<div class="a" style="left:129px;top:112px;width:9px;height:1.3px;background:#444"></div>
<svg class="a" style="left:148px;top:106px;z-index:4" width="6" height="4" viewBox="0 0 6 4"><path d="M0 0 H5 L2.5 3 Z" fill="#777"></path></svg>
<div class="t" style="left: 160px; top: 101.91px; font-size: 10.5px; color: rgb(85, 85, 85); transform: scaleX(0.9328); transform-origin: 0px 0px;">abc</div>
<div class="a" style="left:160px;top:107px;width:16px;height:1px;background:#555"></div>
<div class="t" style="left: 184px; top: 101.84px; font-size: 12px; color: rgb(68, 68, 68); font-weight: bold; transform: scaleX(1.0467); transform-origin: 0px 0px;">x</div>
<div class="t" style="left: 191px; top: 108.57px; font-size: 7px; color: rgb(63, 118, 191); font-weight: bold; transform: scaleX(1.024); transform-origin: 0px 0px;">2</div>
<div class="t" style="left: 206px; top: 101.84px; font-size: 12px; color: rgb(68, 68, 68); font-weight: bold; transform: scaleX(1.0467); transform-origin: 0px 0px;">x</div>
<div class="t" style="left: 213px; top: 99.57px; font-size: 7px; color: rgb(63, 118, 191); font-weight: bold; transform: scaleX(1.024); transform-origin: 0px 0px;">2</div>
<div class="sep" style="left:227px;top:96px;height:24px"></div>
<svg class="a" style="left:236px;top:99px;z-index:4" width="14" height="15" viewBox="0 0 14 15"><path d="M1.2 13 L5.5 1.2 H8.5 L12.8 13 H9.8 L9 10.6 H5 L4.2 13 Z M5.9 8 H8.1 L7 4.6 Z" fill="#fff" fill-rule="evenodd" stroke="#3f76bf" stroke-width="1.5" stroke-linejoin="round"></path></svg>
<svg class="a" style="left:255px;top:106px;z-index:4" width="6" height="4" viewBox="0 0 6 4"><path d="M0 0 H5 L2.5 3 Z" fill="#777"></path></svg>
<div class="t" style="left: 268px; top: 98.88px; font-size: 9px; color: rgb(85, 85, 85); font-weight: bold; font-family: &quot;Liberation Sans&quot;, sans-serif; transform: scaleX(0.9034); transform-origin: 0px 0px;">ab</div>
<svg class="a" style="left:271px;top:99px;z-index:4" width="14" height="13" viewBox="0 0 14 13"><path d="M2 12 L4 9 L11 1.5 L13 3.5 L6 11 Z" fill="#777"></path></svg>
<div class="a" style="left:268px;top:111px;width:16px;height:4px;background:#f5e14c"></div>
<svg class="a" style="left:290px;top:106px;z-index:4" width="6" height="4" viewBox="0 0 6 4"><path d="M0 0 H5 L2.5 3 Z" fill="#777"></path></svg>
<svg class="a" style="left:305px;top:100px;z-index:4" width="11" height="11" viewBox="0 0 11 11"><path d="M1 10.5 L5.5 0.8 L10 10.5 M2.8 7 H8.2" fill="none" stroke="#505050" stroke-width="1.9"></path></svg>
<div class="a" style="left:302px;top:111px;width:16px;height:4px;background:#c00020"></div>
<svg class="a" style="left:324px;top:106px;z-index:4" width="6" height="4" viewBox="0 0 6 4"><path d="M0 0 H5 L2.5 3 Z" fill="#777"></path></svg>
<svg class="a" style="left:346px;top:67px;z-index:4" width="14" height="17" viewBox="0 0 14 17"><circle cx="1.6" cy="2.4" r="1.4" fill="#3f76bf"></circle><path d="M5 2.4 H13" stroke="#666" stroke-width="1"></path><circle cx="1.6" cy="8.4" r="1.4" fill="#3f76bf"></circle><path d="M5 8.4 H13" stroke="#666" stroke-width="1"></path><circle cx="1.6" cy="14.4" r="1.4" fill="#3f76bf"></circle><path d="M5 14.4 H13" stroke="#666" stroke-width="1"></path></svg>
<svg class="a" style="left:367px;top:75px;z-index:4" width="6" height="4" viewBox="0 0 6 4"><path d="M0 0 H5 L2.5 3 Z" fill="#777"></path></svg>
<svg class="a" style="left:379px;top:66px;z-index:4" width="16" height="18" viewBox="0 0 16 18"><text x="0.5" y="6" font-size="6" font-weight="bold" fill="#3f76bf" font-family="Liberation Sans">1</text><path d="M6 3.5 H15" stroke="#666" stroke-width="1"></path><text x="0.5" y="12" font-size="6" font-weight="bold" fill="#3f76bf" font-family="Liberation Sans">2</text><path d="M6 9.5 H15" stroke="#666" stroke-width="1"></path><text x="0.5" y="18" font-size="6" font-weight="bold" fill="#3f76bf" font-family="Liberation Sans">3</text><path d="M6 15.5 H15" stroke="#666" stroke-width="1"></path></svg>
<svg class="a" style="left:401px;top:75px;z-index:4" width="6" height="4" viewBox="0 0 6 4"><path d="M0 0 H5 L2.5 3 Z" fill="#777"></path></svg>
<svg class="a" style="left:412px;top:66px;z-index:4" width="18" height="18" viewBox="0 0 18 18"><text x="0" y="6" font-size="6" font-weight="bold" fill="#3f76bf" font-family="Liberation Sans">1</text><path d="M5 3.5 H16" stroke="#666"></path><text x="5" y="12" font-size="6" font-weight="bold" fill="#3f76bf" font-family="Liberation Sans">a</text><path d="M10 9.5 H16" stroke="#666"></path><text x="9" y="17.5" font-size="6" font-weight="bold" fill="#3f76bf" font-family="Liberation Sans">i</text><path d="M13 15.5 H16" stroke="#666"></path></svg>
<svg class="a" style="left:433px;top:75px;z-index:4" width="6" height="4" viewBox="0 0 6 4"><path d="M0 0 H5 L2.5 3 Z" fill="#777"></path></svg>
<div class="sep" style="left:447px;top:65px;height:22px"></div>
<svg class="a" style="left:455px;top:70px;z-index:4" width="17" height="12" viewBox="0 0 17 12"><path d="M3 1.5 H16 M6 4.5 H16 M6 7.5 H16 M3 10.5 H16" stroke="#666" stroke-width="1"></path><path d="M0 5.5 L4.5 2 V4.3 H8 V6.7 H4.5 V9 Z" fill="#3f76bf"></path></svg>
<svg class="a" style="left:477px;top:70px;z-index:4" width="17" height="12" viewBox="0 0 17 12"><path d="M0 1.5 H16 M8 4.5 H16 M8 7.5 H16 M0 10.5 H16" stroke="#666" stroke-width="1"></path><path d="M8.5 5.5 L4 2 V4.3 H0 V6.7 H4 V9 Z" fill="#3f76bf"></path></svg>
<div class="sep" style="left:501px;top:65px;height:22px"></div>
<div class="t" style="left: 509.8px; top: 68.65px; font-size: 7.5px; color: rgb(63, 118, 191); font-weight: bold; transform: scaleX(1.1804); transform-origin: 0px 0px;">A</div>
<div class="t" style="left: 510px; top: 76.65px; font-size: 7.5px; color: rgb(90, 90, 168); font-weight: bold; transform: scaleX(1.3497); transform-origin: 0px 0px;">Z</div>
<svg class="a" style="left:517px;top:68px;z-index:4" width="7" height="16" viewBox="0 0 7 16"><path d="M3.5 0 V14 M0.5 10.5 L3.5 14.5 L6.5 10.5" fill="none" stroke="#555" stroke-width="1.3"></path></svg>
<div class="sep" style="left:531px;top:65px;height:22px"></div>
<svg class="a" style="left:541px;top:70px;z-index:4" width="12" height="13" viewBox="0 0 12 13"><path d="M6 0.5 H11.5 M6.5 0.5 V12.5 M9.5 0.5 V12.5" stroke="#555" stroke-width="1.6" fill="none"></path><path d="M6.5 0.5 A3.3 3.3 0 0 0 6.5 7 Z" fill="#555"></path></svg>
<div class="a" style="left:342px;top:96px;width:22px;height:23px;background:#c5d9f1"></div>
<svg class="a" style="left:346px;top:101px;z-index:4" width="16" height="12" viewBox="0 0 16 12"><path d="M0 1.5 H14" stroke="#555" stroke-width="1"></path><path d="M0 4.5 H10" stroke="#555" stroke-width="1"></path><path d="M0 7.5 H14" stroke="#555" stroke-width="1"></path><path d="M0 10.5 H10" stroke="#555" stroke-width="1"></path></svg>
<svg class="a" style="left:368px;top:101px;z-index:4" width="16" height="12" viewBox="0 0 16 12"><path d="M0 1.5 H14" stroke="#555" stroke-width="1"></path><path d="M2 4.5 H12" stroke="#555" stroke-width="1"></path><path d="M0 7.5 H14" stroke="#555" stroke-width="1"></path><path d="M2 10.5 H12" stroke="#555" stroke-width="1"></path></svg>
<svg class="a" style="left:390px;top:101px;z-index:4" width="16" height="12" viewBox="0 0 16 12"><path d="M0 1.5 H14" stroke="#555" stroke-width="1"></path><path d="M4 4.5 H14" stroke="#555" stroke-width="1"></path><path d="M0 7.5 H14" stroke="#555" stroke-width="1"></path><path d="M4 10.5 H14" stroke="#555" stroke-width="1"></path></svg>
<svg class="a" style="left:412px;top:101px;z-index:4" width="16" height="12" viewBox="0 0 16 12"><path d="M0 1.5 H14" stroke="#555" stroke-width="1"></path><path d="M0 4.5 H14" stroke="#555" stroke-width="1"></path><path d="M0 7.5 H14" stroke="#555" stroke-width="1"></path><path d="M0 10.5 H14" stroke="#555" stroke-width="1"></path></svg>
<div class="sep" style="left:434px;top:96px;height:24px"></div>
<svg class="a" style="left:442px;top:99px;z-index:4" width="16" height="17" viewBox="0 0 16 17"><path d="M3 1.5 V15.5 M0.5 4 L3 1 L5.5 4 M0.5 13 L3 16 L5.5 13" fill="none" stroke="#3f76bf" stroke-width="1.3"></path><path d="M7 3.5 H15 M7 6.5 H15 M7 9.5 H15 M7 12.5 H15" stroke="#555" stroke-width="1"></path></svg>
<svg class="a" style="left:462px;top:107px;z-index:4" width="6" height="4" viewBox="0 0 6 4"><path d="M0 0 H5 L2.5 3 Z" fill="#777"></path></svg>
<div class="sep" style="left:476px;top:96px;height:24px"></div>
<svg class="a" style="left:484px;top:99px;z-index:4" width="17" height="17" viewBox="0 0 17 17"><path d="M1.5 8.5 L6.5 3.5 L11.5 8.5 L6.5 13.5 Z" fill="#fff" stroke="#666"></path><path d="M4.5 5.5 V1 H7 V5.5" fill="none" stroke="#666"></path><path d="M11.5 8.5 Q14.5 5.5 12 3.5 L14.5 4 L15 9 Z" fill="#3f76bf"></path><rect x="0.5" y="13" width="15" height="3.5" fill="#fff" stroke="#777"></rect></svg>
<svg class="a" style="left:506px;top:107px;z-index:4" width="6" height="4" viewBox="0 0 6 4"><path d="M0 0 H5 L2.5 3 Z" fill="#777"></path></svg>
<svg class="a" style="left:519px;top:100px;z-index:4" width="14" height="14" viewBox="0 0 14 14"><rect x="0" y="0" width="1" height="1" fill="#555"></rect><rect x="0" y="2" width="1" height="1" fill="#555"></rect><rect x="0" y="4" width="1" height="1" fill="#555"></rect><rect x="0" y="6" width="1" height="1" fill="#555"></rect><rect x="0" y="8" width="1" height="1" fill="#555"></rect><rect x="0" y="10" width="1" height="1" fill="#555"></rect><rect x="2" y="0" width="1" height="1" fill="#555"></rect><rect x="2" y="6" width="1" height="1" fill="#555"></rect><rect x="4" y="0" width="1" height="1" fill="#555"></rect><rect x="4" y="6" width="1" height="1" fill="#555"></rect><rect x="6" y="0" width="1" height="1" fill="#555"></rect><rect x="6" y="2" width="1" height="1" fill="#555"></rect><rect x="6" y="4" width="1" height="1" fill="#555"></rect><rect x="6" y="6" width="1" height="1" fill="#555"></rect><rect x="6" y="8" width="1" height="1" fill="#555"></rect><rect x="6" y="10" width="1" height="1" fill="#555"></rect><rect x="8" y="0" width="1" height="1" fill="#555"></rect><rect x="8" y="6" width="1" height="1" fill="#555"></rect><rect x="10" y="0" width="1" height="1" fill="#555"></rect><rect x="10" y="6" width="1" height="1" fill="#555"></rect><rect x="12" y="0" width="1" height="1" fill="#555"></rect><rect x="12" y="2" width="1" height="1" fill="#555"></rect><rect x="12" y="4" width="1" height="1" fill="#555"></rect><rect x="12" y="6" width="1" height="1" fill="#555"></rect><rect x="12" y="8" width="1" height="1" fill="#555"></rect><rect x="12" y="10" width="1" height="1" fill="#555"></rect><path d="M0 13 H14" stroke="#555" stroke-width="1.2"></path></svg>
<svg class="a" style="left:540px;top:107px;z-index:4" width="6" height="4" viewBox="0 0 6 4"><path d="M0 0 H5 L2.5 3 Z" fill="#777"></path></svg>
<div class="a" style="left:568px;top:60.5px;width:305px;height:59px;border:1px solid #c6c6c6;background:#fff"></div>
<div class="a" style="left:569.5px;top:62px;width:71.5px;height:56px;border:3.5px solid #c3d5ee"></div>
<div class="a" style="left:858px;top:61px;width:1px;height:58px;background:#d6d6d6"></div>
<div class="a" style="left:858px;top:81px;width:14px;height:1px;background:#c6c6c6"></div>
<div class="a" style="left:858px;top:100px;width:14px;height:1px;background:#c6c6c6"></div>
<svg class="a" style="left:862px;top:69px;z-index:4" width="6" height="4" viewBox="0 0 6 4"><path d="M0 3 H5 L2.5 0 Z" fill="#c8c8c8"></path></svg>
<svg class="a" style="left:862px;top:89px;z-index:4" width="6" height="4" viewBox="0 0 6 4"><path d="M0 0 H5 L2.5 3 Z" fill="#555"></path></svg>
<svg class="a" style="left:862px;top:106px;z-index:4" width="6" height="7" viewBox="0 0 6 7"><path d="M0 0.5 H5" stroke="#555"></path><path d="M0 2.5 H5 L2.5 5.5 Z" fill="#555"></path></svg>
<div class="a" style="left:575.6px;top:73px;width:58.6px;height:17px;overflow:hidden"><div class="t" style="left: 0px; top: 4.1034px; font-size: 12.4px; color: rgb(0, 0, 0); -webkit-text-stroke: 0.2px rgb(0, 0, 0); transform: scaleX(0.9952); transform-origin: 0px 0px;">AaBbCcDd</div></div>
<div class="t" style="left: 580px; top: 100.54px; font-size: 12px; color: rgb(85, 85, 85); transform: scaleX(1.0051); transform-origin: 0px 0px;">¶ Normal</div>
<div class="a" style="left:647.5px;top:73px;width:58.5px;height:17px;overflow:hidden"><div class="t" style="left: 0px; top: 4.1034px; font-size: 12.4px; color: rgb(0, 0, 0); -webkit-text-stroke: 0.2px rgb(0, 0, 0); transform: scaleX(0.9952); transform-origin: 0px 0px;">AaBbCcDd</div></div>
<div class="t" style="left: 646.3px; top: 100.54px; font-size: 12px; color: rgb(85, 85, 85); transform: scaleX(0.933); transform-origin: 0px 0px;">¶ No Spac...</div>
<div class="a" style="left:720px;top:70px;width:57.5px;height:22px;overflow:hidden"><div class="t" style="left: 0px; top: 4.1095px; font-size: 17px; color: rgb(46, 116, 181); transform: scaleX(1.0581); transform-origin: 0px 0px;">AaBbCc</div></div>
<div class="t" style="left: 722.3px; top: 100.64px; font-size: 12px; color: rgb(85, 85, 85); transform: scaleX(0.9631); transform-origin: 0px 0px;">Heading 1</div>
<div class="a" style="left:792px;top:72px;width:57.5px;height:18px;overflow:hidden"><div class="t" style="left: 0px; top: 2.52575px; font-size: 14.5px; color: rgb(46, 116, 181); transform: scaleX(0.8922); transform-origin: 0px 0px;">AaBbCcDd</div></div>
<div class="t" style="left: 794.7px; top: 100.64px; font-size: 12px; color: rgb(85, 85, 85); transform: scaleX(0.9741); transform-origin: 0px 0px;">Heading 2</div>
<svg class="a" style="left:65px;top:135px;z-index:4" width="7" height="7" viewBox="0 0 7 7"><path d="M0.5 6 V0.5 H6" fill="none" stroke="#777"></path><path d="M2.5 2.5 L6.5 6.5 M6.5 3.5 V6.5 H3.5" fill="none" stroke="#666" stroke-width="1.2"></path></svg>
<svg class="a" style="left:326px;top:135px;z-index:4" width="7" height="7" viewBox="0 0 7 7"><path d="M0.5 6 V0.5 H6" fill="none" stroke="#777"></path><path d="M2.5 2.5 L6.5 6.5 M6.5 3.5 V6.5 H3.5" fill="none" stroke="#666" stroke-width="1.2"></path></svg>
<svg class="a" style="left:551px;top:135px;z-index:4" width="7" height="7" viewBox="0 0 7 7"><path d="M0.5 6 V0.5 H6" fill="none" stroke="#777"></path><path d="M2.5 2.5 L6.5 6.5 M6.5 3.5 V6.5 H3.5" fill="none" stroke="#666" stroke-width="1.2"></path></svg>
<svg class="a" style="left:869px;top:135px;z-index:4" width="7" height="7" viewBox="0 0 7 7"><path d="M0.5 6 V0.5 H6" fill="none" stroke="#777"></path><path d="M2.5 2.5 L6.5 6.5 M6.5 3.5 V6.5 H3.5" fill="none" stroke="#666" stroke-width="1.2"></path></svg>
<svg class="a" style="left:888px;top:61px;z-index:4" width="15" height="13" viewBox="0 0 15 13"><path d="M1 12.5 V6 L3 2 H6 V12.5 Z M9 12.5 V2 H12 L14 6 V12.5 Z" fill="#555"></path><rect x="6" y="5" width="3" height="4" fill="#555"></rect><path d="M2 9 H5 M10 9 H13" stroke="#fff" stroke-width="0.8"></path></svg>
<div class="t" style="left: 907.7px; top: 62.64px; font-size: 12px; color: rgb(68, 68, 68); transform: scaleX(0.9424); transform-origin: 0px 0px;">Find</div>
<svg class="a" style="left:940px;top:67px;z-index:4" width="6" height="4" viewBox="0 0 6 4"><path d="M0 0 H5 L2.5 3 Z" fill="#666"></path></svg>
<div class="t" style="left: 888px; top: 83.38px; font-size: 9px; color: rgb(85, 85, 85); font-weight: bold; transform: scaleX(0.9969); transform-origin: 0px 0px;">a</div>
<div class="t" style="left: 894.5px; top: 83.38px; font-size: 9px; color: rgb(170, 170, 170); transform: scaleX(1.0966); transform-origin: 0px 0px;">b</div>
<div class="t" style="left: 891.5px; top: 89.96px; font-size: 9.5px; color: rgb(61, 111, 181); font-weight: bold; transform: scaleX(1.0871); transform-origin: 0px 0px;">ac</div>
<svg class="a" style="left:887px;top:93px;z-index:4" width="5" height="5" viewBox="0 0 5 5"><path d="M1 0 V3 H4 M2.5 1.5 L4 3 L2.5 4.5" fill="none" stroke="#3f76bf" stroke-width="0.9"></path></svg>
<div class="t" style="left: 907.7px; top: 85.84px; font-size: 12px; color: rgb(68, 68, 68); transform: scaleX(0.9153); transform-origin: 0px 0px;">Replace</div>
<svg class="a" style="left:892px;top:106px;z-index:4" width="9" height="16" viewBox="0 0 9 16"><path d="M0.5 0.5 V12.5 L3.3 9.8 L5.8 15 L7.3 14.3 L4.9 9.3 H8.5 Z" fill="#fff" stroke="#555" stroke-width="1"></path></svg>
<div class="t" style="left: 907.2px; top: 108.64px; font-size: 12px; color: rgb(68, 68, 68); transform: scaleX(0.9293); transform-origin: 0px 0px;">Select</div>
<svg class="a" style="left:943px;top:113px;z-index:4" width="6" height="4" viewBox="0 0 6 4"><path d="M0 0 H5 L2.5 3 Z" fill="#666"></path></svg>
<svg class="a" style="left:1004px;top:135px;z-index:4" width="10" height="6" viewBox="0 0 10 6"><path d="M1 5 L5 1 L9 5" fill="none" stroke="#555" stroke-width="1.6"></path></svg>
<div class="t" style="left: 8.4px; top: 629.57px; font-size: 11.5px; color: rgb(255, 255, 255); transform: scaleX(0.8869); transform-origin: 0px 0px;">PAGE 1 OF 1</div>
<div class="t" style="left: 90.9px; top: 629.57px; font-size: 11.5px; color: rgb(255, 255, 255); transform: scaleX(0.9117); transform-origin: 0px 0px;">143 WORDS</div>
<svg class="a" style="left:172px;top:628px;z-index:4" width="15" height="14" viewBox="0 0 15 14"><path d="M0.5 1 Q3.5 0 7 1.5 Q10.5 0 13.5 1 V11.5 Q10.5 10.5 7 12 Q3.5 10.5 0.5 11.5 Z M7 1.5 V12" fill="none" stroke="#fff" stroke-width="1"></path><path d="M7.5 7 L9.5 9 L14 3" fill="none" stroke="#fff" stroke-width="1.2"></path></svg>
<svg class="a" style="left:206px;top:627px;z-index:4" width="15" height="15" viewBox="0 0 15 15"><circle cx="3.5" cy="3.5" r="3" fill="#fff"></circle><rect x="2" y="5.5" width="12" height="9" fill="#fff"></rect><rect x="4" y="8" width="2" height="1.5" fill="#2b579a"></rect><rect x="4" y="10.5" width="2" height="1.5" fill="#2b579a"></rect><rect x="7" y="8" width="2" height="1.5" fill="#2b579a"></rect><rect x="7" y="10.5" width="2" height="1.5" fill="#2b579a"></rect><rect x="10" y="8" width="2" height="1.5" fill="#2b579a"></rect><rect x="10" y="10.5" width="2" height="1.5" fill="#2b579a"></rect></svg>
<div class="a" style="left:764.5px;top:624px;width:37px;height:22px;background:#1e4e8a"></div>
<svg class="a" style="left:738px;top:628px;z-index:4" width="15" height="13" viewBox="0 0 15 13"><path d="M0.5 1 H6.5 L7 1.5 L7.5 1 H13.5 V11.5 H7.5 L7 12 L6.5 11.5 H0.5 Z M7 1.5 V12" fill="none" stroke="#fff"></path><path d="M2 3.5 H5.5 M2 5.5 H5.5 M2 7.5 H5.5 M8.5 3.5 H12 M8.5 5.5 H12 M8.5 7.5 H12" stroke="#fff" stroke-width="0.9"></path></svg>
<svg class="a" style="left:776px;top:628px;z-index:4" width="15" height="14" viewBox="0 0 15 14"><rect x="0.5" y="0.5" width="14" height="13" fill="none" stroke="#fff"></rect><path d="M3 3.5 H12 M3 5.5 H12 M3 7.5 H12 M3 9.5 H12" stroke="#fff" stroke-width="1"></path></svg>
<svg class="a" style="left:814px;top:628px;z-index:4" width="15" height="14" viewBox="0 0 15 14"><path d="M0.5 0.5 H9.5 V6 M0.5 0.5 V12.5 H6" fill="none" stroke="#fff"></path><path d="M2.5 3 H7.5 M2.5 5 H7.5 M2.5 7 H6" stroke="#fff"></path><circle cx="10.5" cy="10" r="3.8" fill="#fff"></circle><path d="M8.5 8.5 Q10.5 10 12.5 11.5 M10 7 Q9 10 11 13" fill="none" stroke="#2b579a" stroke-width="0.9"></path></svg>
<div class="a" style="left:845px;top:634px;width:6px;height:2px;background:#fff"></div>
<div class="a" style="left:855px;top:634px;width:100px;height:1px;background:#fff"></div>
<div class="a" style="left:893px;top:628px;width:5px;height:14px;background:#fff"></div>
<div class="a" style="left:905px;top:632px;width:1px;height:5px;background:#fff"></div>
<svg class="a" style="left:959px;top:631px;z-index:4" width="9" height="9" viewBox="0 0 9 9"><path d="M4.5 0 V9 M0 4.5 H9" stroke="#fff" stroke-width="2"></path></svg>
<div class="t" style="left: 982px; top: 629.57px; font-size: 11.5px; color: rgb(255, 255, 255); transform: scaleX(0.9031); transform-origin: 0px 0px;">80%</div>
<div class="t" style="left: 133px; top: 168.11px; font-size: 14.4px; color: rgb(46, 116, 181); transform: scaleX(1.0775); transform-origin: 0px 0px;">Example of an edited text</div>
<div class="a" style="left:301px;top:-1px;width:50px;height:50px;border-radius:50%;background:rgba(255,255,0,0.5);z-index:20"></div>
<svg class="a" style="left:325px;top:23px;z-index:21" width="13" height="20" viewBox="0 0 13 20"><path d="M1 1 V15.5 L4.5 12.3 L7.2 18.2 L9.6 17.1 L7 11.3 H11.8 Z" fill="#fff" stroke="#000" stroke-width="1.1" stroke-linejoin="round"></path></svg>
<div id="frameL" class="a"></div><div id="frameR" class="a"></div><div id="frameT" class="a"></div><div id="frameB" class="a"></div>

</body></html>
